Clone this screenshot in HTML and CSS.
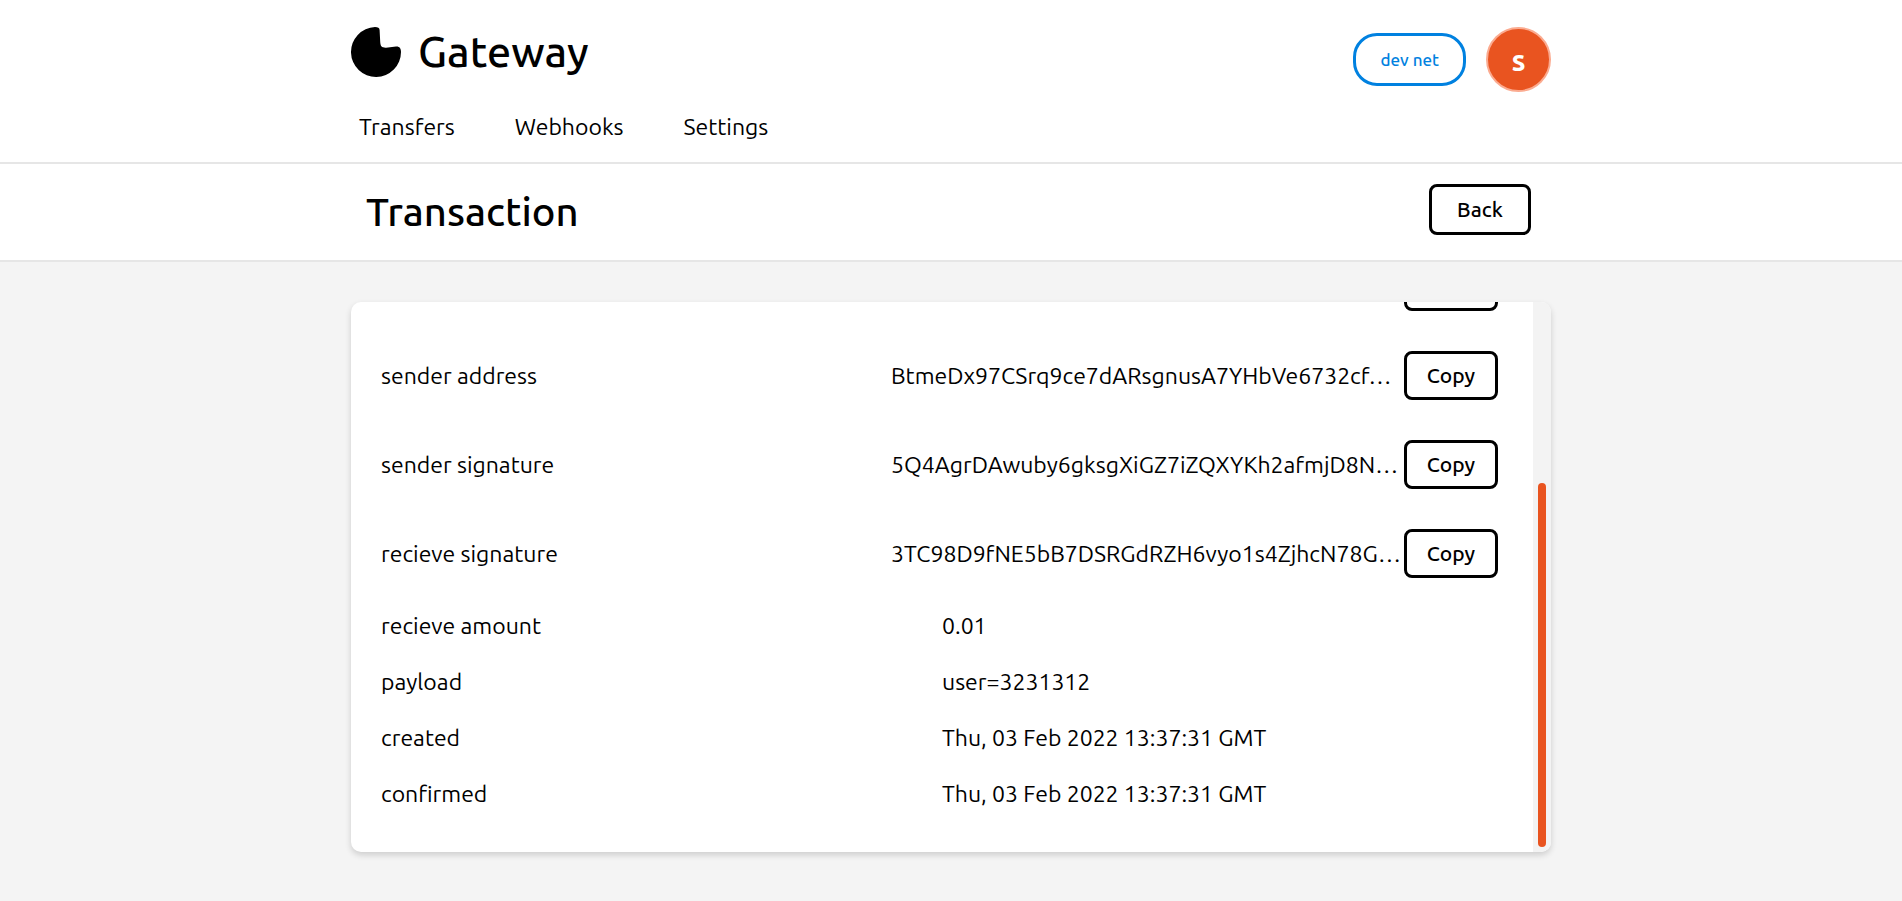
FILE: index.html
```html
<!DOCTYPE html>
<html lang="en">
<head>
<meta charset="utf-8">
<title>Gateway</title>
<link rel="stylesheet" href="styles.css">
</head>
<body>
<header class="header">
  <div class="container header-inner">
    <div class="header-left">
      <a class="brand" href="#">
        <svg class="logo" viewBox="0 0 50 50" aria-hidden="true"><path d="M24 0C27 0 28.400 .8 28.600 3L29.200 14.500C29.400 19 30.500 20.800 35 20.700L45 19.600C48.500 19.300 50 21.500 50 25A25 25 0 1 1 24 0Z"/></svg>
        <span>Gateway</span>
      </a>
      <nav class="nav">
        <a href="#">Transfers</a>
        <a href="#">Webhooks</a>
        <a href="#">Settings</a>
      </nav>
    </div>
    <div class="header-right">
      <button class="network" type="button">dev net</button>
      <button class="avatar" type="button">s</button>
    </div>
  </div>
</header>
<section class="titlebar">
  <div class="container titlebar-inner">
    <h1 class="title">Transaction</h1>
    <button class="button button-back" type="button">Back</button>
  </div>
</section>
<main class="container main">
  <div class="card">
    <div class="scroller">
      <dl class="details">
        <div class="row row-copy"><dt></dt><dd><span class="value"></span><button class="button" type="button" aria-label="Copy"></button></dd></div>
        <div class="row row-copy"><dt>sender address</dt><dd><span class="value">BtmeDx97CSrq9ce7dARsgnusA7YHbVe6732cf…</span><button class="button" type="button">Copy</button></dd></div>
        <div class="row row-copy"><dt>sender signature</dt><dd><span class="value">5Q4AgrDAwuby6gksgXiGZ7iZQXYKh2afmjD8N…</span><button class="button" type="button">Copy</button></dd></div>
        <div class="row row-copy"><dt>recieve signature</dt><dd><span class="value">3TC98D9fNE5bB7DSRGdRZH6vyo1s4ZjhcN78G…</span><button class="button" type="button">Copy</button></dd></div>
        <div class="row"><dt>recieve amount</dt><dd>0.01</dd></div>
        <div class="row"><dt>payload</dt><dd>user=3231312</dd></div>
        <div class="row"><dt>created</dt><dd>Thu, 03 Feb 2022 13:37:31 GMT</dd></div>
        <div class="row"><dt>confirmed</dt><dd>Thu, 03 Feb 2022 13:37:31 GMT</dd></div>
      </dl>
    </div>
    <div class="scrollbar"><div class="thumb"></div></div>
  </div>
</main>
</body>
</html>
```
FILE: styles.css
```css
* { box-sizing: border-box; }
body {
  margin: 0;
  min-height: 100vh;
  background: #f4f4f4;
  color: #000;
  font-family: Ubuntu, "Noto Sans", sans-serif;
  font-size: 23px;
  line-height: 28px;
  display: flex;
  flex-direction: column;
}
button { font-family: inherit; cursor: pointer; }
a { color: inherit; text-decoration: none; }
.container { width: 100%; max-width: 1200px; margin: 0 auto; }
.header { background: #fff; border-bottom: 2px solid #e6e6e6; }
.header-inner { display: flex; justify-content: space-between; align-items: flex-start; padding: 27px 0 21px; }
.header-left { display: flex; flex-direction: column; gap: 36px; }
.brand { display: flex; align-items: flex-start; gap: 17px; font-size: 43px; font-weight: 500; line-height: 48px; }
.logo { width: 50px; height: 50px; }
.nav { display: flex; gap: 60px; padding-left: 8px; }
.header-right { display: flex; align-items: center; gap: 20px; }
.network { height: 53px; padding: 0 24px; border: 3px solid #0081e0; border-radius: 24px; background: #fff; color: #0081e0; font-size: 17px; font-weight: 500; }
.avatar { width: 65px; height: 65px; padding: 0; border: 2px solid #fbab90; border-radius: 50%; background: #e95420; color: #fff; font-size: 30px; font-weight: 700; line-height: 36px; }
.titlebar { background: #fff; border-bottom: 2px solid #e6e6e6; }
.titlebar-inner { display: flex; justify-content: space-between; align-items: flex-start; padding: 20px 20px 20px 15px; }
.title { margin: 0; font-size: 40px; font-weight: 500; line-height: 56px; }
.button { flex: none; width: 94px; height: 49px; padding: 0 0 2px; border: 3px solid #000; border-radius: 8px; background: #fff; color: #000; font-size: 21px; font-weight: 500; }
.button-back { width: 102px; height: 51px; }
.main { padding: 40px 0 49px; }
.card {
  display: flex;
  height: calc(100vh - 351px);
  overflow: hidden;
  background: #fff;
  border-radius: 10px;
  box-shadow: 0 3px 6px rgba(0, 0, 0, .16);
}
/* The reversed column keeps the list scrolled to its last row. */
.scroller {
  flex: 1;
  min-width: 0;
  display: flex;
  flex-direction: column-reverse;
  overflow-y: auto;
  scrollbar-width: none;
}
.scrollbar { flex: none; display: flex; flex-direction: column; justify-content: flex-end; width: 18px; padding: 5px; background: #f3f3f3; }
.thumb { height: 67.5%; border-radius: 4px; background: #e95420; }
.details { margin: 0; padding: 30px; }
.row { display: grid; grid-template-columns: 1fr 1fr; align-items: center; min-height: 56px; }
.row dt, .row dd { margin: 0; min-width: 0; }
.row-copy { grid-template-columns: 5fr 6fr; min-height: 89px; }
.row-copy dd { display: flex; align-items: center; padding-right: 5px; }
.value { flex: 1; min-width: 0; overflow: hidden; white-space: nowrap; }
```
